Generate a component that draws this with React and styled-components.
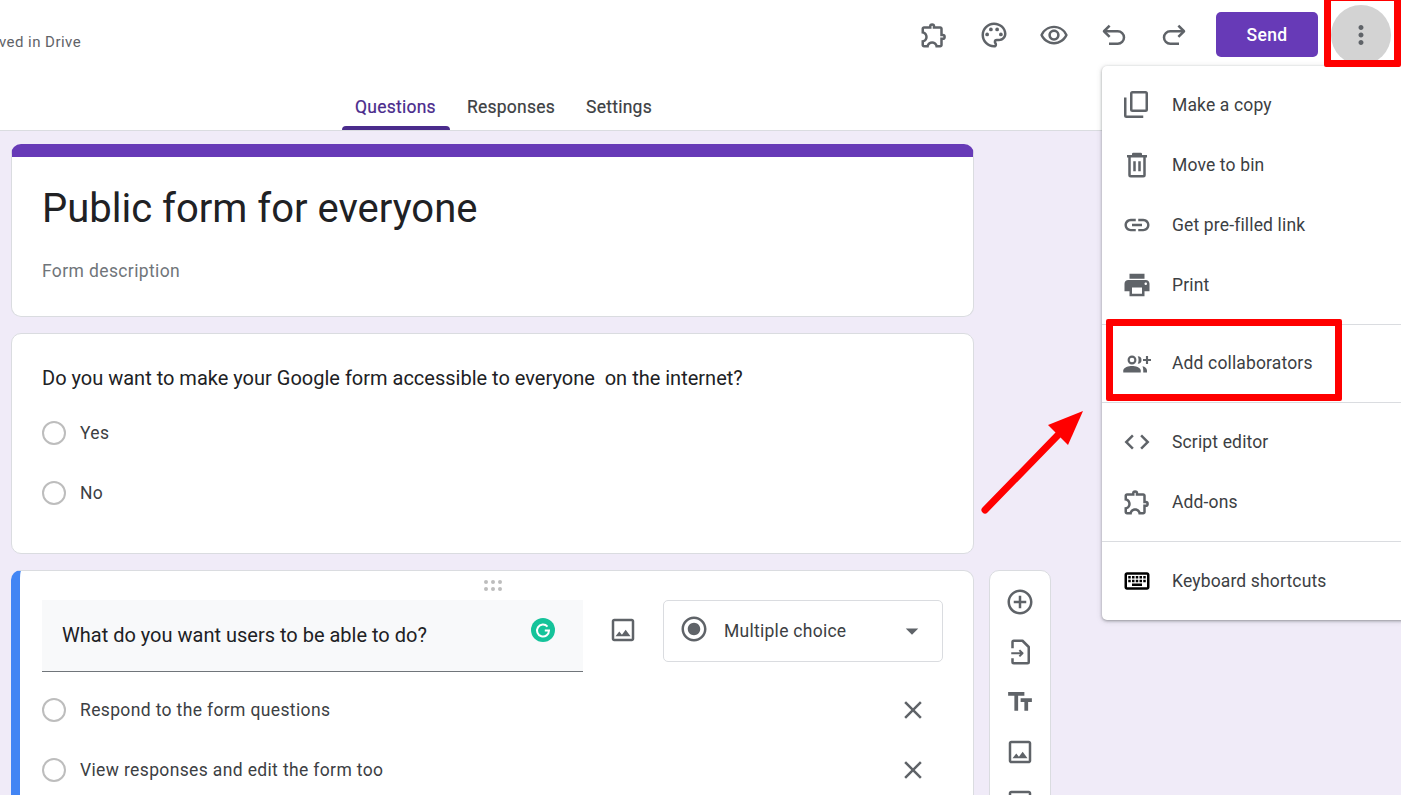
import React from "react";
import styled, { createGlobalStyle } from "styled-components";
import {
  MdOutlineExtension,
  MdOutlinePalette,
  MdOutlineRemoveRedEye,
  MdMoreVert,
  MdLink,
  MdPrint,
  MdCode,
  MdOutlineKeyboard,
  MdOutlineImage,
  MdClose,
  MdAddCircleOutline,
  MdArrowDropDown,
  MdRadioButtonChecked,
  MdTextFields,
  MdOutlineViewAgenda,
} from "react-icons/md";

const GlobalStyle = createGlobalStyle`
  html, body {
    margin: 0;
    padding: 0;
    overflow: hidden;
  }
  body {
    font-family: Roboto, "Liberation Sans", sans-serif;
    color: #202124;
  }
`;

const Page = styled.div`
  position: relative;
  width: 1401px;
  height: 795px;
  overflow: hidden;
  display: flex;
  flex-direction: column;
  background: #f0ebf8;
`;

const Header = styled.header`
  flex: none;
  height: 131px;
  box-sizing: border-box;
  background: #fff;
  border-bottom: 1px solid #dadce0;
  display: flex;
  flex-direction: column;
`;

const TopBar = styled.div`
  height: 70px;
  padding-right: 10px;
  box-sizing: border-box;
  display: flex;
  align-items: center;
`;

const SaveStatus = styled.span`
  font-size: 15px;
  color: #5f6368;
  margin: 14px auto 0 -1px;
  letter-spacing: 0.45px;
`;

const IconButton = styled.button`
  flex: none;
  width: 60px;
  height: 60px;
  padding: 0;
  border: 0;
  border-radius: 50%;
  background: ${(p) => (p.$active ? "#d3d3d3" : "transparent")};
  color: #5f6368;
  display: flex;
  align-items: center;
  justify-content: center;
  font-size: 30px;
`;

const SendButton = styled.button`
  width: 102px;
  height: 45px;
  margin: -1px 13px 0 12px;
  border: 0;
  border-radius: 5px;
  background: #673ab7;
  color: #fff;
  font: 500 17.5px Roboto, sans-serif;
  letter-spacing: 0.3px;
`;

const Tabs = styled.nav`
  flex: 1;
  padding-left: 342px;
  display: flex;
  align-items: flex-end;
  gap: 4px;
`;

const Tab = styled.div`
  height: 46px;
  padding: 0 14px 0 13px;
  box-sizing: border-box;
  display: flex;
  align-items: center;
  position: relative;
  font-size: 17.5px;
  letter-spacing: 0.25px;
  color: ${(p) => (p.$active ? "#4a2b8c" : "#3c4043")};
  -webkit-text-stroke: 0.2px currentColor;

  &::after {
    content: "";
    display: ${(p) => (p.$active ? "block" : "none")};
    position: absolute;
    left: 0;
    right: 0;
    bottom: 0;
    height: 4px;
    border-radius: 4px 4px 0 0;
    background: #4a2b8c;
  }
`;

const Body = styled.main`
  flex: 1;
  min-height: 0;
  padding: 13px 0 0 11px;
  display: flex;
  align-items: flex-start;
  gap: 15px;
`;

const FormColumn = styled.div`
  width: 963px;
  flex: none;
  display: flex;
  flex-direction: column;
`;

const Card = styled.section`
  background: #fff;
  border: 1px solid #dadce0;
  border-radius: 10px;
  box-sizing: border-box;
`;

const TitleCard = styled(Card)`
  height: 173px;
  border-top: 13px solid #673ab7;
  padding: 25px 30px 0 30px;
`;

const FormTitle = styled.h1`
  margin: 0;
  font-size: 40px;
  font-weight: 400;
  line-height: 54px;
  color: #202124;
`;

const FormDescription = styled.p`
  margin: 23px 0 0;
  font-size: 17.5px;
  line-height: 24px;
  letter-spacing: 0.38px;
  color: #70757a;
`;

const QuestionCard = styled(Card)`
  height: 221px;
  margin-top: 16px;
  padding: 31px 30px 0 30px;
`;

const QuestionText = styled.div`
  font-size: 20px;
  line-height: 26px;
  color: #202124;
  white-space: pre;
  margin-bottom: 12px;
`;

const OptionRow = styled.div`
  height: 60px;
  display: flex;
  align-items: center;
  gap: 14px;
  font-size: 17.5px;
  letter-spacing: 0.36px;
  color: #3c4043;
`;

const Radio = styled.span`
  flex: none;
  width: 24px;
  height: 24px;
  box-sizing: border-box;
  border: 2px solid #bdbdbd;
  border-radius: 50%;
`;

const OptionLabel = styled.span`
  flex: 1;
`;

const EditCard = styled(Card)`
  position: relative;
  height: 320px;
  margin-top: 16px;
  border-left: 9px solid #4285f4;
  padding: 29px 30px 0 22px;
`;

const DragHandle = styled.svg`
  position: absolute;
  top: 8px;
  left: 464px;
  width: 20px;
  height: 13px;
  fill: #bdbdbd;
`;

const EditorRow = styled.div`
  display: flex;
  align-items: flex-start;
  margin-bottom: 8px;
`;

const QuestionInput = styled.div`
  position: relative;
  width: 541px;
  height: 72px;
  box-sizing: border-box;
  padding: 0 20px 2px;
  background: #f8f9fa;
  border-bottom: 1px solid #70757a;
  display: flex;
  align-items: center;
  font-size: 20px;
  color: #202124;
`;

const GrammarlyBadge = styled.svg`
  position: absolute;
  top: 18px;
  right: 28px;
  width: 24px;
  height: 24px;
`;

const ImageSlot = styled.div`
  width: 80px;
  height: 60px;
  display: flex;
  align-items: center;
  justify-content: center;
  font-size: 30px;
  color: #5f6368;
`;

const TypeSelect = styled.div`
  width: 280px;
  height: 62px;
  box-sizing: border-box;
  border: 1px solid #dadce0;
  border-radius: 5px;
  padding: 0 15px;
  display: flex;
  align-items: center;
  font-size: 17.5px;
  letter-spacing: 0.27px;
  color: #3c4043;
  svg {
    flex: none;
    color: #5f6368;
  }
  svg:first-child {
    margin-top: -4px;
  }
  span {
    flex: 1;
    margin-left: 15px;
  }
`;

const RemoveIcon = styled.span`
  flex: none;
  margin-right: 15px;
  display: flex;
  font-size: 30px;
  color: #5f6368;
`;

const SideToolbar = styled(Card)`
  flex: none;
  width: 62px;
  margin-top: 426px;
  height: 280px;
  padding-top: 16px;
  display: flex;
  flex-direction: column;
  align-items: center;
  gap: 20px;
  font-size: 30px;
  color: #5f6368;
  svg {
    flex: none;
  }
`;

const Menu = styled.div`
  position: absolute;
  top: 66px;
  left: 1102px;
  right: -6px;
  height: 554px;
  box-sizing: border-box;
  padding: 9px 0;
  background: #fff;
  border-radius: 5px;
  box-shadow: 0 1px 3px rgba(60, 64, 67, 0.45), 0 1px 6px rgba(60, 64, 67, 0.15);
`;

const MenuItem = styled.div`
  height: 60px;
  padding-left: 20px;
  display: flex;
  align-items: center;
  gap: 20px;
  font-size: 17.5px;
  letter-spacing: 0.15px;
  color: #3c4043;
  svg {
    flex: none;
    font-size: 30px;
    color: ${(p) => p.$iconColor || "#5f6368"};
  }
`;

const MenuDivider = styled.hr`
  margin: 9px 0 ${(p) => (p.$tight ? 8 : 9)}px;
  border: 0;
  border-top: 1px solid #dadce0;
`;

const Highlight = styled.div`
  position: absolute;
  box-sizing: border-box;
  border: 7px solid #ff0000;
  border-radius: 2px;
  pointer-events: none;
  left: ${(p) => p.$left}px;
  top: ${(p) => p.$top}px;
  width: ${(p) => p.$width}px;
  height: ${(p) => p.$height}px;
`;

const ArrowOverlay = styled.svg`
  position: absolute;
  left: 975px;
  top: 400px;
  width: 120px;
  height: 125px;
`;

const StrokeIcon = ({ children, width = 2 }) => (
  <svg
    width="1em"
    height="1em"
    viewBox="0 0 24 24"
    fill="none"
    stroke="currentColor"
    strokeWidth={width}
    strokeLinejoin="round"
  >
    {children}
  </svg>
);

const UndoIcon = () => (
  <StrokeIcon>
    <path d="M8.5 4.5L4 9l4.5 4.5" />
    <path d="M4 9h11a5 5 0 0 1 0 10H8" />
  </StrokeIcon>
);

const RedoIcon = () => (
  <StrokeIcon>
    <path d="M15.5 4.5L20 9l-4.5 4.5" />
    <path d="M20 9H9a5 5 0 0 0 0 10h7" />
  </StrokeIcon>
);

const CopyIcon = () => (
  <StrokeIcon>
    <rect x="7.4" y="1.8" width="12.4" height="14.8" rx="1" />
    <path d="M2.6 6v14.4a1 1 0 0 0 1 1H17" />
  </StrokeIcon>
);

const TrashIcon = () => (
  <StrokeIcon>
    <path d="M4 5h16M9 5V3.2h6V5" />
    <path d="M6 5v15a1 1 0 0 0 1 1h10a1 1 0 0 0 1-1V5" />
    <path d="M10 9v8M14 9v8" />
  </StrokeIcon>
);

const CollaboratorsIcon = () => (
  <svg width="1em" height="1em" viewBox="0 0 24 24" fill="currentColor">
    <circle cx="8" cy="9.6" r="2.7" fill="none" stroke="currentColor" strokeWidth="1.7" />
    <path d="M1 19.5V18c0-2.6 4.5-3.7 7-3.7s7 1.1 7 3.7v1.5z" />
    <path d="M12.6 6.6a3 3 0 0 1 0 6c.9-1.8.9-4.2 0-6z" />
    <path d="M16.4 14.6c2 .5 3.6 1.5 3.6 3.4v1.5h-3V18c0-1.3-.2-2.4-.6-3.4z" />
    <path d="M20 6.4v6.4M16.8 9.6h6.4" fill="none" stroke="currentColor" strokeWidth="1.7" />
  </svg>
);

const FileImportIcon = () => (
  <StrokeIcon>
    <path d="M6 9V4a1 1 0 0 1 1-1h7l5 5v12a1 1 0 0 1-1 1H7a1 1 0 0 1-1-1v-3" />
    <path d="M5 13h9M11.5 10.5L14 13l-2.5 2.500" strokeWidth="1.6" />
  </StrokeIcon>
);

const menuGroups = [
  [
    { label: "Make a copy", icon: CopyIcon },
    { label: "Move to bin", icon: TrashIcon },
    { label: "Get pre-filled link", icon: MdLink },
    { label: "Print", icon: MdPrint },
  ],
  [{ label: "Add collaborators", icon: CollaboratorsIcon }],
  [
    { label: "Script editor", icon: MdCode },
    { label: "Add-ons", icon: MdOutlineExtension },
  ],
  [{ label: "Keyboard shortcuts", icon: MdOutlineKeyboard, color: "#000" }],
];

export default function App() {
  return (
    <Page>
      <GlobalStyle />
      <Header>
        <TopBar>
          <SaveStatus>ved in Drive</SaveStatus>
          <IconButton><MdOutlineExtension /></IconButton>
          <IconButton><MdOutlinePalette /></IconButton>
          <IconButton><MdOutlineRemoveRedEye /></IconButton>
          <IconButton><UndoIcon /></IconButton>
          <IconButton><RedoIcon /></IconButton>
          <SendButton>Send</SendButton>
          <IconButton $active><MdMoreVert /></IconButton>
        </TopBar>
        <Tabs>
          <Tab $active>Questions</Tab>
          <Tab>Responses</Tab>
          <Tab>Settings</Tab>
        </Tabs>
      </Header>

      <Body>
        <FormColumn>
          <TitleCard>
            <FormTitle>Public form for everyone</FormTitle>
            <FormDescription>Form description</FormDescription>
          </TitleCard>

          <QuestionCard>
            <QuestionText>Do you want to make your Google form accessible to everyone  on the internet?</QuestionText>
            <OptionRow><Radio /><OptionLabel>Yes</OptionLabel></OptionRow>
            <OptionRow><Radio /><OptionLabel>No</OptionLabel></OptionRow>
          </QuestionCard>

          <EditCard>
            <DragHandle viewBox="0 0 20 13">
              {[2, 9, 16].map((x) =>
                [3, 10].map((y) => <circle key={`${x}-${y}`} cx={x} cy={y} r="2" />)
              )}
            </DragHandle>
            <EditorRow>
              <QuestionInput>
                What do you want users to be able to do?
                <GrammarlyBadge viewBox="0 0 24 24">
                  <circle cx="12" cy="12" r="12" fill="#15c39a" />
                  <path d="M16.5 8.6A6 6 0 1 0 18 12.6h-4.2" fill="none" stroke="#fff" strokeWidth="2" />
                </GrammarlyBadge>
              </QuestionInput>
              <ImageSlot><MdOutlineImage /></ImageSlot>
              <TypeSelect>
                <MdRadioButtonChecked size={30} />
                <span>Multiple choice</span>
                <MdArrowDropDown size={30} />
              </TypeSelect>
            </EditorRow>
            <OptionRow>
              <Radio />
              <OptionLabel>Respond to the form questions</OptionLabel>
              <RemoveIcon><MdClose /></RemoveIcon>
            </OptionRow>
            <OptionRow>
              <Radio />
              <OptionLabel>View responses and edit the form too</OptionLabel>
              <RemoveIcon><MdClose /></RemoveIcon>
            </OptionRow>
          </EditCard>
        </FormColumn>

        <SideToolbar>
          <MdAddCircleOutline />
          <FileImportIcon />
          <MdTextFields />
          <MdOutlineImage />
          <MdOutlineViewAgenda />
        </SideToolbar>
      </Body>

      <Menu>
        {menuGroups.map((group, i) => (
          <React.Fragment key={i}>
            {i > 0 && <MenuDivider $tight={i === 1} />}
            {group.map(({ label, icon: Icon, color }) => (
              <MenuItem key={label} $iconColor={color}>
                <Icon />
                {label}
              </MenuItem>
            ))}
          </React.Fragment>
        ))}
      </Menu>

      <Highlight $left={1324} $top={-6} $width={77} $height={73} />
      <Highlight $left={1106} $top={319} $width={236} $height={82} />
      <ArrowOverlay viewBox="975 400 120 125">
        <path d="M985 510L1058 435" stroke="#ff0000" strokeWidth="7" strokeLinecap="round" fill="none" />
        <polygon points="1083,411 1048,425 1068,445" fill="#ff0000" />
      </ArrowOverlay>
    </Page>
  );
}
